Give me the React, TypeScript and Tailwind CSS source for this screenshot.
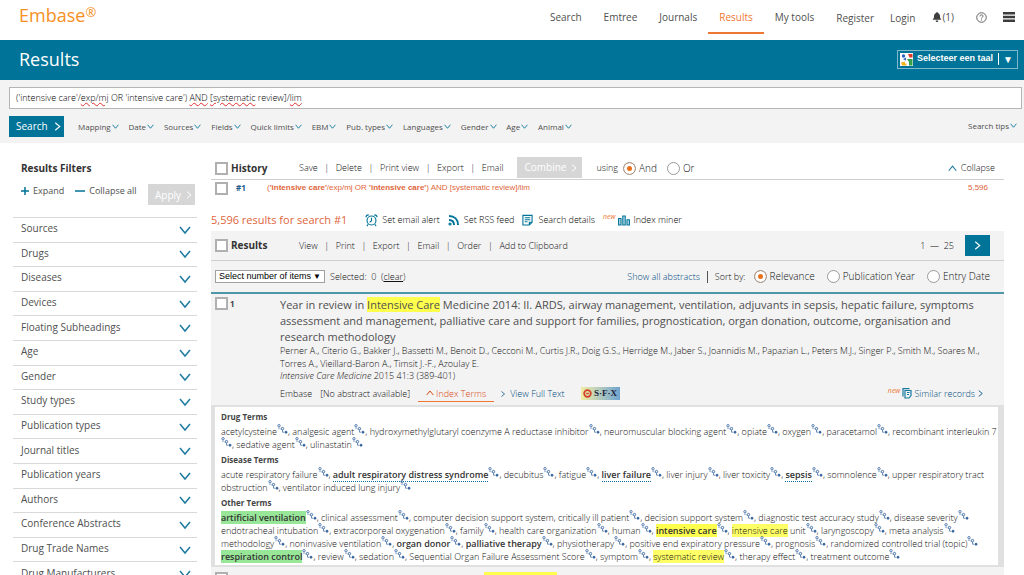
import React, { useState } from "react";

type Term = { text: string; style?: "bold" | "linked" | "green" | "boldYellow" | "yellow" | "plain"; tail?: string };

const navItems = ["Search", "Emtree", "Journals", "Results", "My tools"];

const limits = [
  "Mapping", "Date", "Sources", "Fields", "Quick limits", "EBM",
  "Pub. types", "Languages", "Gender", "Age", "Animal",
];

const filters = [
  "Sources", "Drugs", "Diseases", "Devices", "Floating Subheadings", "Age", "Gender",
  "Study types", "Publication types", "Journal titles", "Publication years", "Authors",
  "Conference Abstracts", "Drug Trade Names", "Drug Manufacturers",
];

const t = (text: string, style?: Term["style"], tail?: string): Term => ({ text, style, tail });

const termGroups: { title: string; lines: Term[][] }[] = [
  {
    title: "Drug Terms",
    lines: [
      [
        t("acetylcysteine"), t("analgesic agent"), t("hydroxymethylglutaryl coenzyme A reductase inhibitor"),
        t("neuromuscular blocking agent"), t("opiate"), t("oxygen"), t("paracetamol"),
        t("recombinant interleukin 7", "plain"),
      ],
      [t(""), t("sedative agent"), t("ulinastatin")],
    ],
  },
  {
    title: "Disease Terms",
    lines: [
      [
        t("acute respiratory failure"), t("adult respiratory distress syndrome", "linked"), t("decubitus"),
        t("fatigue"), t("liver failure", "linked"), t("liver injury"), t("liver toxicity"),
        t("sepsis", "linked"), t("somnolence"), t("upper respiratory tract", "plain"),
      ],
      [t("obstruction"), t("ventilator induced lung injury")],
    ],
  },
  {
    title: "Other Terms",
    lines: [
      [
        t("artificial ventilation", "green"), t("clinical assessment"),
        t("computer decision support system, critically ill patient"), t("decision support system"),
        t("diagnostic test accuracy study"), t("disease severity"),
      ],
      [
        t("endotracheal intubation"), t("extracorporeal oxygenation"), t("family"),
        t("health care organization"), t("human"), t("intensive care", "boldYellow"),
        t("intensive care", "yellow", " unit"), t("laryngoscopy"), t("meta analysis"),
      ],
      [
        t("methodology"), t("noninvasive ventilation"), t("organ donor", "bold"),
        t("palliative therapy", "bold"), t("physiotherapy"), t("positive end expiratory pressure"),
        t("prognosis"), t("randomized controlled trial (topic)"),
      ],
      [
        t("respiration control", "green"), t("review"), t("sedation"),
        t("Sequential Organ Failure Assessment Score"), t("symptom"),
        t("systematic review", "yellow"), t("therapy effect"), t("treatment outcome"),
      ],
    ],
  },
];

const termClass: Record<string, string> = {
  bold: "font-semibold text-[#333]",
  linked: "border-b border-dotted border-[#0b6f99] font-semibold text-[#333]",
  green: "bg-[#98e698] font-semibold text-[#333]",
  boldYellow: "bg-[#ffff4d] font-semibold text-[#333]",
  yellow: "bg-[#ffff66]",
};

function Chevron({ dir, className }: { dir: "down" | "up" | "right"; className: string }) {
  const d = dir === "down" ? "M1 3l5 6 5-6" : dir === "up" ? "M1 9l5-6 5 6" : "M3 1l6 5-6 5";
  return (
    <svg viewBox="0 0 12 12" className={className} fill="none" stroke="currentColor" strokeWidth="1.5" aria-hidden="true">
      <path d={d} />
    </svg>
  );
}

function TreeIcon() {
  return (
    <svg viewBox="0 0 11 10" className="inline h-[10px] w-[11px] align-[1px]" fill="none" stroke="#33639f" aria-hidden="true">
      <circle cx="2" cy="1.7" r="1.2" strokeWidth=".8" />
      <path d="M2 3.500v1.600M3.500 5h1M5.500 6v2.200h1.500" strokeWidth=".7" />
      <circle cx="5.500" cy="4.600" r="1.200" strokeWidth=".9" />
      <circle cx="9" cy="8.200" r="1" strokeWidth="1" fill="#33639f" />
    </svg>
  );
}

function Tick({ label }: { label: string }) {
  return (
    <input
      type="checkbox"
      aria-label={label}
      className="h-[13px] w-[13px] shrink-0 appearance-none border-2 border-[#b0b0b0] bg-white checked:bg-[#007398]"
    />
  );
}

function Radio({ name, label, checked, onPick, className }: { name: string; label: string; checked: boolean; onPick: () => void; className: string }) {
  return (
    <label className={`flex items-center gap-[3px] whitespace-nowrap ${className}`}>
      <input
        type="radio"
        name={name}
        checked={checked}
        onChange={onPick}
        className="h-[13px] w-[13px] appearance-none rounded-full border border-[#9a9a9a] bg-white checked:bg-[#e9711c] checked:shadow-[inset_0_0_0_3px_white]"
      />
      {label}
    </label>
  );
}

function Actions({ items }: { items: string[] }) {
  return (
    <div className="flex items-center">
      {items.map((item, i) => (
        <React.Fragment key={item}>
          {i > 0 && <span className="w-[18px] text-center">|</span>}
          <button type="button" className="whitespace-nowrap">{item}</button>
        </React.Fragment>
      ))}
    </div>
  );
}

function TopBar() {
  return (
    <header className="flex h-10 items-start justify-between bg-white pl-[19px] pr-[9px]">
      <a href="#home" className="flex text-[18px] leading-[30px] text-[#f6901e]">
        Embase<sup className="top-0 text-[13px] leading-6">®</sup>
      </a>
      <div className="flex items-start text-[10px] leading-[34px] text-[#4f4f4f]">
        <nav className="flex">
          {navItems.map((item) => (
            <a
              key={item}
              href={`#${item}`}
              className={
                item === "Results"
                  ? "h-[34px] border-b-2 border-[#ee7733] px-[11px] text-[#ee7733]"
                  : "h-[34px] px-[11px]"
              }
            >
              {item}
            </a>
          ))}
        </nav>
        <a href="#register" className="ml-[11px] leading-9">Register</a>
        <a href="#login" className="ml-4 leading-9">Login</a>
        <button type="button" className="ml-[17px] flex items-center leading-[34px]">
          <svg viewBox="0 0 10 10" className="h-[10px] w-[10px]" fill="#3f3f3f" aria-hidden="true">
            <path d="M5 0c.6 0 .8.4.8.9C7.500 1.300 8 2.700 8 4.200c0 1.800.5 2.600 1.500 3.600H.5C1.500 6.800 2 6 2 4.200 2 2.700 2.500 1.300 4.200.9 4.200.4 4.400 0 5 0zM3.700 8.400h2.600C6.300 9.400 5.800 10 5 10S3.700 9.400 3.700 8.400z" />
          </svg>
          (1)
        </button>
        <button type="button" aria-label="Help" className="ml-[22px] h-[34px]">
          <svg viewBox="0 0 12 12" className="h-[11px] w-[11px]" fill="none" stroke="#555" strokeWidth="1" aria-hidden="true">
            <circle cx="6" cy="6" r="5.200" />
            <path d="M4.300 4.800C4.300 3.600 5 3.100 6 3.100s1.700.6 1.700 1.500C7.700 5.600 6 5.700 6 7.100M6 8.100v1.100" />
          </svg>
        </button>
        <button type="button" aria-label="Menu" className="ml-4 h-[34px]">
          <svg viewBox="0 0 12 10" className="h-[10px] w-3" fill="#3c3c3c" aria-hidden="true">
            <path d="M0 0h12v2.500H0zM0 3.800h12v2.500H0zM0 7.500h12V10H0z" />
          </svg>
        </button>
      </div>
    </header>
  );
}

function TitleBand() {
  return (
    <div className="flex h-10 items-center justify-between bg-[#007398] pb-[2px] pl-[19px] pr-[6px]">
      <h1 className="text-[18px] leading-6 text-white">Results</h1>
      <button
        type="button"
        className="flex h-[19px] items-center border border-[#7fb9cb] pl-[2px] pr-1 font-['Liberation_Sans',sans-serif] text-[9px] font-bold text-white"
      >
        <svg viewBox="0 0 13 13" className="mr-1 h-[13px] w-[13px]" aria-hidden="true">
          <path fill="#fff" d="M0 0h13v13H0z" />
          <circle cx="3.500" cy="3" r="1.700" fill="#2a62c9" />
          <path fill="#2a62c9" d="M3 6.300l3-1.800v3z" />
          <path fill="#d93a2b" d="M8 1h4.500v3.500H9.500z" />
          <path fill="#35a047" d="M7 6h5.500v6.500H9V9z" />
          <path fill="#f5b41c" d="M1 9.500l4-1v2h1.500v2H2z" />
        </svg>
        Selecteer een taal
        <span className="ml-[5px] h-3 border-l border-white" />
        <span className="ml-1 text-[10px]">▼</span>
      </button>
    </div>
  );
}

function Misspelt({ children }: { children: React.ReactNode }) {
  return <span className="underline decoration-[#e03030] decoration-wavy decoration-1 underline-offset-1">{children}</span>;
}

function SearchPanel() {
  return (
    <form className="bg-[#f3f3f3] pb-[6px] pl-[9px] pr-[2px] pt-[7px]" onSubmit={(e) => e.preventDefault()}>
      <div
        role="textbox"
        aria-label="Search query"
        contentEditable
        suppressContentEditableWarning
        spellCheck={false}
        className="h-[22px] border border-[#b5b5b5] bg-white pl-[6px] text-[9px] font-light leading-5 text-black outline-none"
      >
        ('intensive care'/<Misspelt>exp/mj</Misspelt> OR 'intensive care') <Misspelt>AND</Misspelt>{" "}
        <Misspelt>[systematic</Misspelt> review]/<Misspelt>lim</Misspelt>
      </div>
      <div className="mt-[7px] flex h-[21px] items-center text-[8px] text-[#4f4f4f]">
        <button type="submit" className="flex h-[21px] w-[55px] items-center gap-[5px] bg-[#007398] pl-[7px] text-[10px] text-white">
          Search
          <Chevron dir="right" className="h-[9px] w-[9px]" />
        </button>
        <div className="ml-[14px] flex w-[494px] items-center justify-between">
          {limits.map((item) => (
            <button key={item} type="button" className="flex items-center whitespace-nowrap">
              {item}
              <Chevron dir="down" className="ml-px h-[7px] w-[7px] text-[#007398]" />
            </button>
          ))}
        </div>
        <button type="button" className="ml-auto mr-[5px] flex items-center gap-px pb-[2px]">
          Search tips
          <Chevron dir="down" className="h-[7px] w-[7px] text-[#007398]" />
        </button>
      </div>
    </form>
  );
}

function Sidebar() {
  return (
    <aside className="w-[184px] shrink-0 pt-[15px]">
      <h2 className="pl-2 text-[10px] font-bold leading-5 text-[#333]">Results Filters</h2>
      <div className="flex h-[39px] pl-2 pt-[6px] text-[9px] leading-[14px] text-[#4f4f4f]">
        <button type="button" className="flex h-[14px] items-center gap-1">
          <svg viewBox="0 0 8 8" className="h-2 w-2" stroke="#007398" strokeWidth="1.500" aria-hidden="true"><path d="M4 0v8M0 4h8" /></svg>
          Expand
        </button>
        <button type="button" className="ml-[11px] flex h-[14px] items-center gap-1">
          <svg viewBox="0 0 10 8" className="h-2 w-[10px]" stroke="#007398" strokeWidth="1.500" aria-hidden="true"><path d="M0 4h10" /></svg>
          Collapse all
        </button>
        <button type="button" disabled className="ml-auto mr-[2px] flex h-[21px] w-[47px] items-center gap-1 bg-[#d6d6d6] pl-[7px] text-[10px] text-white">
          Apply
          <Chevron dir="right" className="h-2 w-2" />
        </button>
      </div>
      <ul className="flex h-[369px] flex-col text-[10px] text-[#4f4f4f]">
        {filters.map((f) => (
          <li key={f} className="flex-1 border-t border-[#d9d9d9]">
            <button type="button" className="flex h-full w-full items-center justify-between pl-2 pr-[6px]">
              <span className="pb-[2px]">{f}</span>
              <Chevron dir="down" className="h-3 w-3 text-[#1f7ba0]" />
            </button>
          </li>
        ))}
      </ul>
    </aside>
  );
}

function NewTag() {
  return <span className="self-start text-[7px] font-normal italic leading-[7px] text-[#ee7733]">new</span>;
}

function History() {
  const [op, setOp] = useState("And");
  return (
    <section>
      <div className="flex h-[23px] items-center border-b border-[#cfcfcf] pl-1 pr-[9px] text-[9px] font-light text-[#111]">
        <Tick label="Select all history" />
        <h2 className="ml-[3px] w-[68px] text-[10px] font-bold text-[#333]">History</h2>
        <Actions items={["Save", "Delete", "Print view", "Export", "Email"]} />
        <button type="button" disabled className="ml-[14px] mr-[14px] flex h-[21px] w-[65px] items-center gap-1 self-start bg-[#d6d6d6] pl-[7px] text-[10px] font-normal text-white">
          Combine
          <Chevron dir="right" className="h-2 w-2" />
        </button>
        using
        <Radio name="op" label="And" checked={op === "And"} onPick={() => setOp("And")} className="ml-[5px] text-[10px]" />
        <Radio name="op" label="Or" checked={op === "Or"} onPick={() => setOp("Or")} className="ml-[10px] text-[10px]" />
        <button type="button" className="ml-auto flex items-center gap-1">
          <Chevron dir="up" className="h-[9px] w-[9px] text-[#1f7ba0]" />
          Collapse
        </button>
      </div>
      <div className="flex h-4 items-center pl-1 pr-4 text-[8px] text-[#e0653a]">
        <Tick label="Select search 1" />
        <b className="ml-2 w-[31px] text-[8px] text-[#1d5c8c]">#1</b>
        <a href="#search-1" className="font-['Liberation_Sans',sans-serif]">
          (<b>'intensive care'</b>/exp/mj OR <b>'intensive care'</b>) AND [systematic review]/lim
        </a>
        <span className="ml-auto font-['Liberation_Sans',sans-serif]">5,596</span>
      </div>
    </section>
  );
}

function Tools() {
  return (
    <div className="flex h-[35px] items-center pt-[13px] text-[9px] font-light text-black">
      <h2 className="mr-[18px] text-[11px] font-normal text-[#e0653a]">5,596 results for search #1</h2>
      <button type="button" className="mr-2 flex items-center gap-1">
        <svg viewBox="0 0 14 14" className="h-[13px] w-[13px]" fill="none" stroke="#007398" strokeWidth="1.200" aria-hidden="true">
          <circle cx="7" cy="7" r="4.800" />
          <path d="M7 4v3.300L5 9M1 3.500C1 1.500 2 1 4 1M13 3.500C13 1.500 12 1 10 1M3.500 11L2 13M10.500 11l1.500 2" />
        </svg>
        Set email alert
      </button>
      <button type="button" className="mr-2 flex items-center gap-1">
        <svg viewBox="0 0 12 12" className="h-3 w-3" fill="none" stroke="#007398" strokeWidth="2" aria-hidden="true">
          <path d="M1 2c5.500 0 9 3.500 9 9M1 6c3 0 5 2 5 5" />
          <circle cx="2" cy="10" r=".6" />
        </svg>
        Set RSS feed
      </button>
      <button type="button" className="mr-2 flex items-center gap-[5px]">
        <svg viewBox="0 0 12 12" className="h-3 w-[11px]" fill="none" stroke="#007398" strokeWidth="1.200" aria-hidden="true">
          <path d="M1 1h10v7.500L8 11.400H1zM3 3.500h6M3 5.700h6M3 7.900h3M8 11V8.500h3" />
        </svg>
        Search details
      </button>
      <button type="button" className="flex items-center">
        <NewTag />
        <svg viewBox="0 0 12 11" className="mx-[3px] h-[11px] w-3" fill="#bfe0ea" stroke="#007398" strokeWidth="1.100" aria-hidden="true">
          <path d="M.6 3.500h2.400v6.500H.6zM4.800 1h2.400v9H4.800zM9 4.800h2.400v5.200H9z" />
        </svg>
        Index miner
      </button>
    </div>
  );
}

function ResultsBars() {
  const [sort, setSort] = useState("Relevance");
  return (
    <div className="bg-[#f3f3f3]">
      <div className="flex h-[30px] items-center border-b border-[#cfcfcf] pl-1 pr-[14px] text-[9px] font-light text-[#111]">
        <Tick label="Select all results" />
        <h2 className="ml-[3px] w-[68px] text-[10px] font-bold text-[#333]">Results</h2>
        <Actions items={["View", "Print", "Export", "Email", "Order", "Add to Clipboard"]} />
        <span className="ml-auto mr-[11px]">1 &nbsp;— &nbsp;25</span>
        <button type="button" aria-label="Next page" className="flex h-[21px] w-[25px] items-center justify-center bg-[#007398] text-white">
          <Chevron dir="right" className="h-[9px] w-[9px]" />
        </button>
      </div>
      <div className="flex h-[31px] items-center pl-1 pr-[14px] text-[9px] font-light text-[#111]">
        <div className="relative">
          <select
            aria-label="Select number of items"
            className="block h-[13px] w-[110px] appearance-none border border-[#a0a0a0] bg-white pl-[3px] font-['Liberation_Sans',sans-serif] text-[9px] font-normal leading-[11px] text-black"
          >
            <option>Select number of items</option>
          </select>
          <span className="pointer-events-none absolute right-1 top-0 text-[8px] leading-[11px] text-black">▼</span>
        </div>
        <span className="ml-[5px]">
          Selected: &nbsp;0 &nbsp;(<a href="#clear" className="underline">clear</a>)
        </span>
        <a href="#abstracts" className="ml-auto text-[#004b80]">Show all abstracts</a>
        <span className="mx-[7px] h-3 border-l border-[#555]" />
        Sort by:
        <Radio name="sort" label="Relevance" checked={sort === "Relevance"} onPick={() => setSort("Relevance")} className="ml-2 text-[10px]" />
        <Radio name="sort" label="Publication Year" checked={sort === "Year"} onPick={() => setSort("Year")} className="ml-3 text-[10px]" />
        <Radio name="sort" label="Entry Date" checked={sort === "Entry"} onPick={() => setSort("Entry")} className="ml-3 text-[10px]" />
      </div>
    </div>
  );
}

function Article() {
  return (
    <article className="border-t-2 border-[#4d97a8] bg-[#f3f3f3]">
      <div className="flex pl-1 pt-[3px]">
        <Tick label="Select result 1" />
        <b className="ml-[2px] w-[50px] text-[8px] leading-[14px] text-[#444]">1</b>
        <div className="min-w-0 flex-1 whitespace-nowrap text-[9px] font-light leading-[13px] text-[#111]">
          <h3 className="h-[47px] text-[11px] font-normal leading-4 text-[#4f4f4f]">
            Year in review in <mark className="bg-[#ffff4d] text-inherit">Intensive Care</mark> Medicine 2014: II. ARDS, airway management, ventilation, adjuvants in sepsis, hepatic failure, symptoms
            <br />
            assessment and management, palliative care and support for families, prognostication, organ donation, outcome, organisation and
            <br />
            research methodology
          </h3>
          <p>
            Perner A., Citerio G., Bakker J., Bassetti M., Benoit D., Cecconi M., Curtis J.R., Doig G.S., Herridge M., Jaber S., Joannidis M., Papazian L., Peters M.J., Singer P., Smith M., Soares M.,
            <br />
            Torres A., Vieillard-Baron A., Timsit J.-F., Azoulay E.
          </p>
          <p className="leading-3"><i>Intensive Care Medicine</i> 2015 41:3 (389-401)</p>
          <div className="flex h-[23px] items-center pr-5">
            <span>Embase</span>
            <span className="ml-2">[No abstract available]</span>
            <button type="button" className="ml-2 flex h-4 items-center gap-[2px] border-b border-[#ee7733] px-2 text-[#d9480f]">
              <Chevron dir="up" className="h-2 w-2" />
              Index Terms
            </button>
            <a href="#fulltext" className="ml-[6px] flex items-center gap-1 text-[#004b80]">
              <Chevron dir="right" className="h-2 w-[6px]" />
              View Full Text
            </a>
            <a href="#sfx" className="ml-4 flex h-[13px] w-[39px] items-center justify-center gap-[2px] bg-linear-to-r from-[#f2eda0] to-[#6fa3cf] font-['Liberation_Serif',serif] text-[9px] font-bold text-[#1d2440]">
              <svg viewBox="0 0 10 10" className="h-[9px] w-[9px]" fill="none" stroke="#d5432a" strokeWidth="2" aria-hidden="true">
                <circle cx="5" cy="5" r="3.700" />
                <path d="M3.500 5h3" strokeWidth="1.500" />
              </svg>
              S·F·X
            </a>
            <a href="#similar" className="ml-auto flex items-center text-[#004b80]">
              <NewTag />
              <svg viewBox="0 0 10 11" className="mx-[2px] h-[11px] w-[10px]" fill="none" stroke="#1779a0" strokeWidth="1.200" aria-hidden="true">
                <path d="M3 2.500h6v5L7 10H3zM1 8.500V.6h6.500M5 4.500h2.500M5 6.500h2" />
              </svg>
              Similar records
              <Chevron dir="right" className="ml-[2px] h-[9px] w-[7px]" />
            </a>
          </div>
        </div>
      </div>
      <div className="border-b-2 border-l-4 border-r-[6px] border-t-2 border-[#e0e0e0] bg-white pb-px pl-[6px] pt-[2px]">
        {termGroups.map((group) => (
          <section key={group.title} className="mb-[2px] text-[9px] font-light leading-[13px] text-[#111]">
            <h4 className="h-[15px] text-[8px] font-bold leading-[15px] text-[#444]">{group.title}</h4>
            {group.lines.map((line, i) => (
              <p key={i} className="h-[13px] whitespace-nowrap">
                {line.map((term, j) => (
                  <React.Fragment key={j}>
                    <span className={termClass[term.style ?? ""] ?? ""}>{term.text}</span>
                    {term.tail}
                    {term.style !== "plain" && <TreeIcon />}
                    {term.style !== "plain" && j < line.length - 1 && ", "}
                  </React.Fragment>
                ))}
              </p>
            ))}
          </section>
        ))}
      </div>
      <div className="flex h-[18px] pl-1 pt-[5px]">
        <Tick label="Select result 2" />
        <div className="ml-[256px] h-[13px] w-[73px] bg-[#ffff4d]" />
      </div>
    </article>
  );
}

export default function App() {
  return (
    <div className="h-screen overflow-hidden bg-white font-['Open_Sans',sans-serif]">
      <TopBar />
      <TitleBand />
      <SearchPanel />
      <div className="flex gap-[14px] pl-[13px] pr-5">
        <Sidebar />
        <main className="min-w-0 flex-1 pt-[14px]">
          <History />
          <Tools />
          <ResultsBars />
          <Article />
        </main>
      </div>
    </div>
  );
}
